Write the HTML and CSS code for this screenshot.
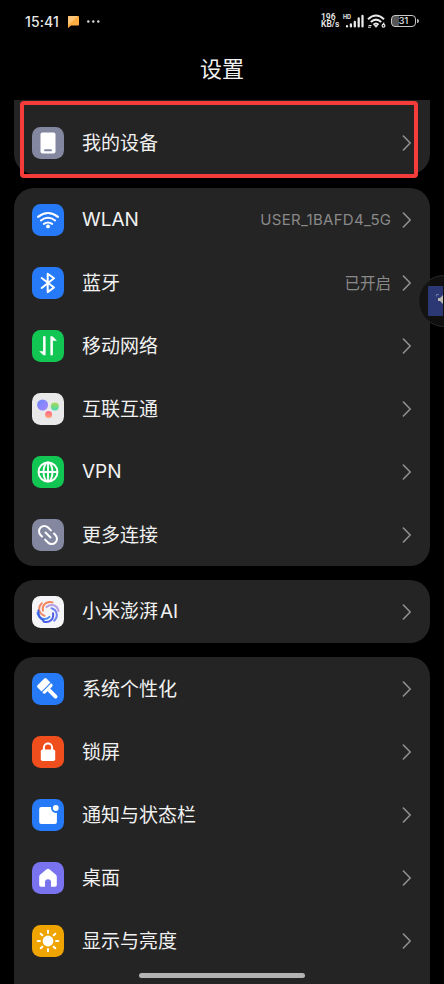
FILE: index.html
```
<!DOCTYPE html>
<html lang="zh-CN">
<head>
<meta charset="utf-8">
<title>设置</title>
<link rel="stylesheet" href="styles.css">
</head>
<body>
<svg class="defs" width="0" height="0">
  <symbol id="chev" viewBox="0 0 10 16"><path d="M1.400 1 8.200 8l-6.800 7" fill="none" stroke="#919191" stroke-width="1.600" stroke-linecap="round" stroke-linejoin="round"/></symbol>
</svg>
<div class="screen">
  <header class="status">
    <span class="time">15:41</span>
    <svg class="msg" width="11" height="12" viewBox="0 0 11 12"><path d="M1 0h9q1 0 1 1v7.500q0 1-1 1H3L0 12V1Q0 0 1 0z" fill="#ffad42"/><path d="M1 0h9L0 9V1Q0 0 1 0z" fill="#ffc678"/></svg>
    <svg class="dots" width="13" height="3" viewBox="0 0 13 3" fill="#ddd"><circle cx="1.300" cy="1.500" r="1.200"/><circle cx="6.300" cy="1.500" r="1.200"/><circle cx="11.300" cy="1.500" r="1.200"/></svg>
    <div class="sysicons">
      <div class="speed"><span>196</span><span>KB/s</span></div>
      <div class="cell"><span class="hd">HD</span>
        <svg width="19" height="14" viewBox="0 0 19 14" stroke="#e8e8e8" stroke-width="2.300" stroke-linecap="round"><path d="M2 12.400v-.2M5.900 12.400v-2M9.800 12.400V8M13.700 12.400V4.500M17.500 12.400V2"/></svg>
      </div>
      <svg class="wifi6" width="19" height="15" viewBox="0 0 19 15" fill="none" stroke="#e8e8e8" stroke-width="2"><path d="M1 5.200Q9 -2.300 17 5.200M3.800 8Q9 3.200 14.200 8M6.400 10.700q2.600-2.400 5.200 0"/><path d="M7.500 11.600h3L9 13.300z" fill="#e8e8e8" stroke-width="1"/><path d="M1.500 11.500h3M1 13.200h3" stroke-width="1"/><path d="M17.200 8.600 15.500 11" stroke-width="1.200"/><circle cx="16.500" cy="11.800" r="1.400" stroke-width="1.200"/></svg>
      <div class="battery"><div class="cellbody"><span>31</span></div><i></i></div>
    </div>
  </header>
  <h1>设置</h1>

  <main>
    <section class="card first">
      <div class="row"><svg class="ico" viewBox="0 0 32 32"><rect width="32" height="32" rx="8.500" fill="#8388a0"/><rect x="8.500" y="5.500" width="15" height="21" rx="2" fill="#fff"/><rect x="12" y="22.300" width="8" height="2" rx="1" fill="#8388a0"/></svg><span class="label">我的设备</span><svg class="chev"><use href="#chev"/></svg></div>
    </section>

    <section class="card">
      <div class="row"><svg class="ico" viewBox="0 0 32 32"><rect width="32" height="32" rx="8.500" fill="#277af7"/><g fill="none" stroke="#fff" stroke-width="2" stroke-linecap="round"><path d="M6 12.900Q16 5.100 26 12.900M8.900 16.500q7.100-5.400 14.200 0M11.900 19.900q4.100-2.900 8.200 0"/></g><circle cx="16" cy="22.400" r="1.900" fill="#fff"/></svg><span class="label latin">WLAN</span><span class="value ssid">USER_1BAFD4_5G</span><svg class="chev"><use href="#chev"/></svg></div>
      <div class="row"><svg class="ico" viewBox="0 0 32 32"><rect width="32" height="32" rx="8.500" fill="#277af7"/><path d="M9.700 11 22 20.500l-6.300 4.600V6.700l6.300 4.600L9.700 21" fill="none" stroke="#fff" stroke-width="2" stroke-linecap="round" stroke-linejoin="round"/></svg><span class="label">蓝牙</span><span class="value">已开启</span><svg class="chev"><use href="#chev"/></svg></div>
      <div class="row"><svg class="ico" viewBox="0 0 32 32"><rect width="32" height="32" rx="8.500" fill="#12c653"/><path d="M11.100 6.300h2.500v19h-2L7.200 21.300h3.900zM18.400 6.300h2l4.600 4.500h-4.100v14.500h-2.500z" fill="#fff"/></svg><span class="label">移动网络</span><svg class="chev"><use href="#chev"/></svg></div>
      <div class="row"><svg class="ico" viewBox="0 0 32 32"><defs><linearGradient id="ga" x1="0" y1="0" x2="1" y2="1"><stop stop-color="#6c87fa"/><stop offset="1" stop-color="#a487fb"/></linearGradient><linearGradient id="gb" x1="0" y1="0" x2="0" y2="1"><stop stop-color="#aadb50"/><stop offset="1" stop-color="#48d9b6"/></linearGradient><linearGradient id="gc" x1="0" y1="0" x2="0" y2="1"><stop stop-color="#ff668b"/><stop offset="1" stop-color="#ffa174"/></linearGradient></defs><rect width="32" height="32" rx="8.500" fill="#e9e9e9"/><circle cx="10.600" cy="12" r="5.500" fill="url(#ga)"/><circle cx="22.800" cy="13.500" r="4" fill="url(#gb)"/><circle cx="16.600" cy="21.500" r="3.500" fill="url(#gc)"/></svg><span class="label">互联互通</span><svg class="chev"><use href="#chev"/></svg></div>
      <div class="row"><svg class="ico" viewBox="0 0 32 32"><rect width="32" height="32" rx="8.500" fill="#12c653"/><g fill="none" stroke="#fff" stroke-width="1.900"><circle cx="16" cy="16" r="9.500"/><ellipse cx="16" cy="16" rx="4.500" ry="9.500"/><path d="M16 6.500v19M6.500 16h19"/></g></svg><span class="label latin">VPN</span><svg class="chev"><use href="#chev"/></svg></div>
      <div class="row"><svg class="ico" viewBox="0 0 32 32"><rect width="32" height="32" rx="8.500" fill="#8388a0"/><g transform="rotate(45 16 16)" fill="none" stroke="#fff" stroke-width="2" stroke-linecap="round"><path d="M12.500 16h7M14.800 10.700h-4a5.300 5.300 0 0 0 0 10.600h2M17.200 21.300h4a5.300 5.300 0 0 0 0-10.600h-2"/></g></svg><span class="label">更多连接</span><svg class="chev"><use href="#chev"/></svg></div>
    </section>

    <section class="card">
      <div class="row"><svg class="ico" viewBox="0 0 32 32"><rect width="32" height="32" rx="8.500" fill="#f5f5f7"/><g fill="none" stroke-width="2" stroke-linecap="round">
        <path d="M20.500 6.400C14.500 4.500 9.800 9 11 14.800" stroke="#f4845e"/>
        <path d="M20.500 6.400C14.500 4.500 9.800 9 11 14.800" stroke="#b7a0e0" transform="rotate(60 16 16)"/>
        <path d="M20.500 6.400C14.500 4.500 9.800 9 11 14.800" stroke="#6f80f0" transform="rotate(120 16 16)"/>
        <path d="M20.500 6.400C14.500 4.500 9.800 9 11 14.800" stroke="#4a5be6" transform="rotate(180 16 16)"/>
        <path d="M20.500 6.400C14.500 4.500 9.800 9 11 14.800" stroke="#4a8bee" transform="rotate(240 16 16)"/>
        <path d="M20.500 6.400C14.500 4.500 9.800 9 11 14.800" stroke="#f08a6c" transform="rotate(300 16 16)"/>
        <path d="M6.400 14.500C6 18.500 8 22.500 11.500 24.500" stroke="#3c5fe6"/>
      </g></svg><span class="label">小米澎湃<span class="latin ai">AI</span></span><svg class="chev"><use href="#chev"/></svg></div>
    </section>

    <section class="card last">
      <div class="row"><svg class="ico" viewBox="0 0 32 32"><rect width="32" height="32" rx="8.500" fill="#277af7"/><g transform="rotate(-45 16 16)" fill="#fff"><path d="M11.200 6h9.600q1.500 0 1.500 1.500v5.700H9.700V7.500Q9.700 6 11.200 6zM9.700 14.200h12.600v1.500q0 1.500-1.500 1.500h-2.900v9.500a1.900 1.900 0 0 1-3.800 0v-9.500h-2.900q-1.500 0-1.500-1.500z"/></g></svg><span class="label">系统个性化</span><svg class="chev"><use href="#chev"/></svg></div>
      <div class="row"><svg class="ico" viewBox="0 0 32 32"><rect width="32" height="32" rx="8.500" fill="#f04f1d"/><rect x="8.800" y="13.500" width="14.400" height="11.500" rx="1.800" fill="#fff"/><path d="M11.900 14v-2.300a4.100 4.100 0 0 1 8.200 0V14" fill="none" stroke="#fff" stroke-width="2"/></svg><span class="label">锁屏</span><svg class="chev"><use href="#chev"/></svg></div>
      <div class="row"><svg class="ico" viewBox="0 0 32 32"><rect width="32" height="32" rx="8.500" fill="#277af7"/><path d="M9.200 7.900h9.800a5 5 0 0 0 5.900 5.900v9.100q0 2-2 2H9.200q-2 0-2-2v-13q0-2 2-2z" fill="#fff"/><circle cx="23.800" cy="9" r="2.900" fill="#fff"/></svg><span class="label">通知与状态栏</span><svg class="chev"><use href="#chev"/></svg></div>
      <div class="row"><svg class="ico" viewBox="0 0 32 32"><rect width="32" height="32" rx="8.500" fill="#7973ef"/><path d="M14.600 7.300q1.400-1.200 2.800 0l6.500 5.500q.9.800.9 2v8.200q0 1.800-1.800 1.800H19v-4.500a3 3 0 0 0-6 0v4.500H9q-1.800 0-1.800-1.800v-8.200q0-1.200.9-2z" fill="#fff"/></svg><span class="label">桌面</span><svg class="chev"><use href="#chev"/></svg></div>
      <div class="row"><svg class="ico" viewBox="0 0 32 32"><rect width="32" height="32" rx="8.500" fill="#f0a400"/><circle cx="16" cy="16" r="5.400" fill="#fff"/><path d="M16 5.700v2.200M16 24.100v2.200M5.700 16h2.200M24.100 16h2.200M8.700 8.700l1.600 1.600M21.700 21.700l1.600 1.600M8.700 23.300l1.600-1.600M21.700 10.300l1.600-1.600" stroke="#fff" stroke-width="2" stroke-linecap="round"/></svg><span class="label">显示与亮度</span><svg class="chev"><use href="#chev"/></svg></div>
    </section>
  </main>

  <div class="highlight"></div>
  <svg class="floater" width="26" height="52" viewBox="0 0 26 52"><circle cx="26" cy="26" r="25.500" fill="#121212" fill-opacity=".85" stroke="#292929"/><path d="M11 11h14v30H11q-1 0-1-1V12q0-1 1-1z" fill="#2c3873"/><path d="M18.500 21.500v-2h2.500" fill="none" stroke="#66739a" stroke-width="1.200"/><path d="M20 23h2l3-3v9l-3-3h-2z" fill="#b9b9b4"/></svg>
  <div class="homebar"></div>
</div>
</body>
</html>
```
FILE: styles.css
```
* { box-sizing: border-box; }
body { margin: 0; background: #000; }
.defs { position: absolute; }
.screen {
  position: relative;
  width: 444px;
  height: 984px;
  overflow: hidden;
  background: #000;
  color: #f1f1f1;
  font-family: "Noto Sans CJK SC", sans-serif;
}
.status {
  height: 42px;
  padding: 0 25px 0 25px;
  display: flex;
  align-items: center;
  font-family: Inter, sans-serif;
}
.time { width: 43px; font-size: 14px; font-weight: 500; letter-spacing: 0.1px; color: #e8e8e8; }
.msg { margin-top: 1px; }
.dots { margin-left: 8px; }
.sysicons { margin-left: auto; display: flex; align-items: center; color: #e8e8e8; }
.speed {
  width: 20px;
  margin-right: 2px;
  display: flex;
  flex-direction: column;
  font-family: Roboto, sans-serif;
  font-size: 8.500px;
  line-height: 7.500px;
  font-weight: 600;
  white-space: nowrap;
}
.cell {
  display: grid;
  width: 22px;
  margin-right: 2px;
}
.cell > * { grid-area: 1 / 1; }
.hd { font-size: 5.500px; line-height: 6px; font-weight: 700; }
.cell svg { margin-left: 2px; }
.wifi6 { margin-right: 5px; }
.battery { display: flex; align-items: center; }
.battery i { width: 2px; height: 4px; margin-left: 1px; border-radius: 0 2px 2px 0; background: #bbb; }
.cellbody {
  width: 25px;
  height: 12px;
  border: 1.500px solid #c8c8c8;
  border-radius: 4px;
  background: linear-gradient(90deg, #555 32%, #000 32%);
  font-size: 9px;
  line-height: 10px;
  font-weight: 500;
  text-align: center;
}
h1 {
  margin: 0;
  height: 58px;
  line-height: 50px;
  font-size: 22px;
  font-weight: 400;
  text-align: center;
}
main { display: flex; flex-direction: column; gap: 14px; padding: 0 14px; }
.card { background: #242424; border-radius: 20px; }
.first { padding-top: 11px; border-radius: 0 0 20px 20px; }
.last { border-radius: 20px 20px 0 0; padding-bottom: 20px; }
.row { height: 63px; padding: 0 18.500px 0 18px; display: flex; align-items: center; }
.ico { width: 32px; height: 32px; margin-right: 18px; flex: none; }
.label { flex: 1; padding-bottom: 1px; font-size: 19px; line-height: 28px; white-space: nowrap; }
.latin { padding-bottom: 0; font-family: Inter, sans-serif; font-size: 19px; }
.value { padding-bottom: 2px; font-size: 15.500px; color: #898989; margin-right: 10.500px; white-space: nowrap; }
.ssid { padding-bottom: 0; font-family: Inter, sans-serif; font-size: 15px; letter-spacing: 0.300px; margin-right: 10.200px; }
.chev { width: 10px; height: 16px; flex: none; }
.ai { margin-left: 2px; }
.highlight {
  position: absolute;
  left: 20px;
  top: 101px;
  width: 398px;
  height: 77px;
  border: 4px solid #f63b3b;
  border-radius: 4px;
}
.floater { position: absolute; left: 418px; top: 275px; }
.homebar {
  position: absolute;
  left: 139px;
  top: 973px;
  width: 166px;
  height: 5px;
  border-radius: 3px;
  background: #b3b3b3;
}
```
